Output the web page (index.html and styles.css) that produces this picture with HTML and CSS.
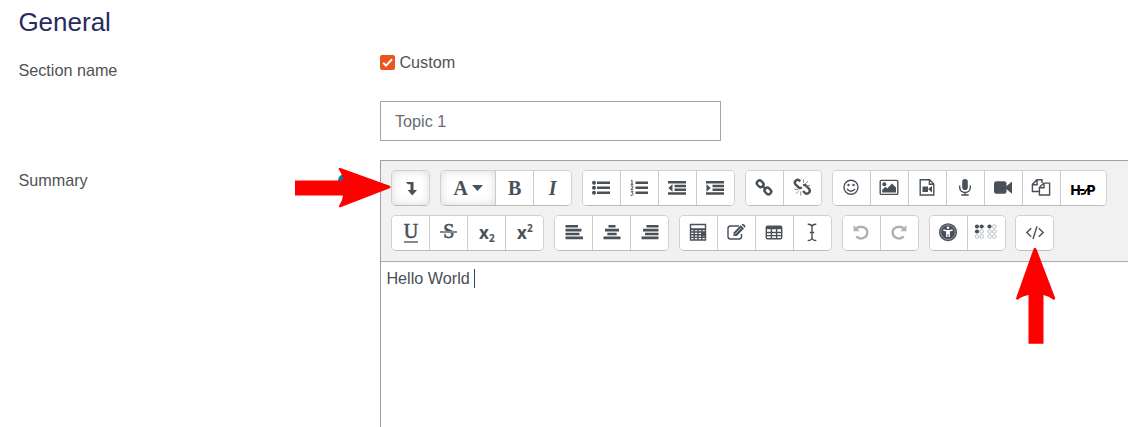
FILE: index.html
```html
<!DOCTYPE html>
<html lang="en">
<head>
<meta charset="utf-8">
<title>General</title>
<link rel="stylesheet" href="styles.css">
</head>
<body>
<main class="form">
  <h1 class="heading">General</h1>
  <div class="row row-name">
    <div class="label label-name">Section name</div>
    <div class="field">
      <label class="check">
        <svg class="checkbox" viewBox="0 0 15 15"><rect width="15" height="15" rx="2" fill="#e95420"/><path d="M3.2 7.8L6 10.6L12 4.2" fill="none" stroke="#fff" stroke-width="2"/></svg>
        <span>Custom</span>
      </label>
      <div class="input">Topic 1</div>
    </div>
  </div>
  <div class="row">
    <div class="label label-summary">Summary<span class="help"></span></div>
    <div class="editor">
      <div class="toolbar">
        <div class="tools">
          <div class="group"><button class="btn lit"><svg class="icon" viewBox="-12 -12 24 24"><path d="M-5-6H2.5V2H6L1.2 7.5L-3.3 2H-.5V-3.7H-3.2Z"/></svg></button></div>
          <div class="group">
            <button class="btn lit wide serif"><span>A</span><svg class="caret" viewBox="0 0 11 6"><path d="M0 0H11L5.5 6Z"/></svg></button>
            <button class="btn serif">B</button>
            <button class="btn serif italic">I</button>
          </div>
          <div class="group">
            <button class="btn"><svg class="icon" viewBox="-12 -12 24 24"><circle cx="-7" cy="-5.3" r="2"/><circle cx="-7" cy="-.3" r="2"/><circle cx="-7" cy="4.7" r="2"/><path d="M-4-6.5H9v2.5H-4ZM-4-1.5H9v2.5H-4ZM-4 3.5H9v2.5H-4Z"/></svg></button>
            <button class="btn"><svg class="icon" viewBox="-12 -12 24 24"><path d="M-3.5-6.5H9v2.5H-3.5ZM-3.5-1.5H9v2.5H-3.5ZM-3.5 3.5H9v2.5H-3.5Z"/><path class="line thin" d="M-8-7.3L-7-8V-3.8M-8.3-3.7H-5.8M-8.2-1.8Q-6.2-3-6-1.2Q-6.2-.1-8 1.4H-5.8M-8.2 3.3H-6L-7.2 5Q-5.6 5-5.9 6.6Q-6.3 8-8.4 7.2"/></svg></button>
            <button class="btn"><svg class="icon" viewBox="-12 -12 24 24"><path d="M-9-7H9v2.5H-9ZM-2.5-3.2H9v2.5H-2.5ZM-2.5.5H9V3H-2.5ZM-9 4.2H9v2.5H-9ZM-4.5-4V3.7L-8.7 0Z"/></svg></button>
            <button class="btn"><svg class="icon" viewBox="-12 -12 24 24"><path d="M-9-7H9v2.5H-9ZM-2.5-3.2H9v2.5H-2.5ZM-2.5.5H9V3H-2.5ZM-9 4.2H9v2.5H-9ZM-8.5-4V3.7L-4.3 0Z"/></svg></button>
          </div>
          <div class="group">
            <button class="btn"><svg class="icon" viewBox="-12 -12 24 24"><g class="line bold"><rect x="-3.5" y="-2.7" width="7" height="5.4" rx="2.5" transform="translate(-3.8 -4.2) rotate(45)"/><rect x="-3.5" y="-2.7" width="7" height="5.4" rx="2.5" transform="translate(3.9 3) rotate(45)"/><path d="M-2.2-2.6L2.2 1.5"/></g></svg></button>
            <button class="btn"><svg class="icon" viewBox="-12 -12 24 24"><path class="line bold" d="M-1.7-6.8L-3.2-8Q-5.1-8.8-6.5-7.1Q-8-5.5-6.5-3.5L-3-.3Q-1.7.6-.2-.6M1.3-2.4Q2.8-3.5 4.2-2.1L7.2 1Q8.6 2.9 7 4.7Q5.2 6.5 3.4 5.3L1 3"/><path class="line thin light" d="M1.5-5.2V-8.7M3.2-4.2L6-7M4.2-2.5H8M-3.8 1.4H-7.6M-3 2.7L-6 5.7M-1.3 3.5V7.5"/></svg></button>
          </div>
          <div class="group">
            <button class="btn"><svg class="icon" viewBox="-12 -12 24 24"><circle class="line" cx="0" cy="-.8" r="7"/><circle cx="-2.5" cy="-3" r="1.2"/><circle cx="2.5" cy="-3" r="1.2"/><path class="line" d="M-4 1Q0 5.5 4 1"/></svg></button>
            <button class="btn"><svg class="icon" viewBox="-12 -12 24 24"><rect class="line" x="-8.8" y="-7.6" width="17.6" height="14" rx="1"/><circle cx="-4.7" cy="-3.7" r="2"/><path d="M-6.8 4.5V1.8L-3.6-1.3L-1.8.4L3-4.4L7-.4V4.5Z"/></svg></button>
            <button class="btn"><svg class="icon" viewBox="-12 -12 24 24"><path class="line" d="M-6.8-8.2H2.6L6.8-4V7H-6.8ZM2.4-8V-3.8H6.6"/><path d="M-4.5-1.5H1V4H-4.5ZM1 1L5-2V4.5Z"/></svg></button>
            <button class="btn"><svg class="icon" viewBox="-12 -12 24 24"><rect x="-2.8" y="-9" width="5.6" height="11" rx="2.8"/><path class="line" d="M-5.3-2.5V-.5C-5.3 6.2 5.3 6.2 5.3-.5V-2.5M0 4.5V7M-3.7 7H3.7"/></svg></button>
            <button class="btn"><svg class="icon" viewBox="-12 -12 24 24"><rect x="-9" y="-6.7" width="12.5" height="12.5" rx="2.5"/><path d="M3-1.5L9-6.5V5.7L3 .8Z"/></svg></button>
            <button class="btn"><svg class="icon" viewBox="-12 -12 24 24"><path class="line" d="M-2 3.5H-8.6V-3.6L-4.1-8.3H1V-5M-8.4-3.3H-3.9V-8M-1.6-.4L2.8-4.9H8.6V7H-1.6ZM-1.4-.3H3V-4.6"/></svg></button>
            <button class="btn h5p"><span>H</span><svg class="h5p-mid" viewBox="0 0 9 12"><path d="M0 6H4.5M1 9.8H3Q5.5 9.6 5.3 7.3L8.5 4.5" fill="none" stroke="#000" stroke-width="1.8"/></svg><span>P</span></button>
          </div>
        </div>
        <div class="tools">
          <div class="group">
            <button class="btn serif under"><span>U</span></button>
            <button class="btn serif strike"><span>S</span></button>
            <button class="btn script"><span>x<small class="sub">2</small></span></button>
            <button class="btn script"><span>x<small class="sup">2</small></span></button>
          </div>
          <div class="group">
            <button class="btn"><svg class="icon" viewBox="-12 -12 24 24"><path d="M-8.5-8H4v2.6H-8.5ZM-8.5-4.2H7.5v2.6H-8.5ZM-8.5-.3H5.5V2.3H-8.5ZM-8.5 3.6H9v2.6H-8.5Z"/></svg></button>
            <button class="btn"><svg class="icon" viewBox="-12 -12 24 24"><path d="M-3.5-8H3.5v2.6H-3.5ZM-7-4.2H7v2.6H-7ZM-4.7-.3H4.7V2.3H-4.7ZM-8.5 3.6H8.5v2.6H-8.5Z"/></svg></button>
            <button class="btn"><svg class="icon" viewBox="-12 -12 24 24"><path d="M-3.5-8H8.5v2.6H-3.5ZM-7-4.2H8.5v2.6H-7ZM-5-.3H8.5V2.3H-5ZM-8.5 3.6H8.5v2.6H-8.5Z"/></svg></button>
          </div>
          <div class="group">
            <button class="btn"><svg class="icon" viewBox="-12 -12 24 24"><path class="line" d="M-7.5-8.5H7.5V7H-7.5ZM-7.5-3.8H7.5M-7.5-1H7.5M-7.5 1.8H7.5M-7.5 4.4H7.5M-3.8-3.8V7M0-3.8V7M3.8-3.8V7"/><path d="M-7-4.5H7v1.8H-7ZM3.8-1H7V3.5H3.8Z"/></svg></button>
            <button class="btn"><svg class="icon" viewBox="-12 -12 24 24"><path class="line" d="M3-7H-5.5Q-8-7-8-4.5V3.5Q-8 6-5.5 6H3Q5.5 6 5.5 3.5V1"/><path d="M-2.5 3V-.6L4.8-7.8L8-4.6L.8 3ZM5.6-8.6L6.5-9.3Q9.5-8.5 9.5-6.2L8.8-5.3Z"/><path d="M-1 1.2L5.2-5" stroke="#fff" stroke-width=".7"/></svg></button>
            <button class="btn"><svg class="icon" viewBox="-12 -12 24 24"><rect class="line" x="-7.7" y="-6.8" width="15.4" height="12.5" rx="1.2"/><path d="M-8-7H8v3.2H-8Z"/><path class="line" d="M-7.5-.5H7.5M-7.5 2.6H7.5M-2.6-4V5.5M2.6-4V5.5"/></svg></button>
            <button class="btn"><svg class="icon" viewBox="-12 -12 24 24"><path class="line" d="M-4.3-8.8Q-.3-9 0-6.3Q.3-9 4.3-8.8M0-6.5V5M-4.3 7.5Q-.3 7.5 0 5Q.3 7.5 4.3 7.5M-2.2-.5H2.2"/></svg></button>
          </div>
          <div class="group">
            <button class="btn faded"><svg class="icon" viewBox="-12 -12 24 24"><path class="line bold" d="M-5-4.3C-1-8.3 6.3-5.7 6.3-.8C6.3 5.7-1.7 7.2-4.7 3.2"/><path d="M-7.4-7.7V-1.8H-1.4Z"/></svg></button>
            <button class="btn faded"><svg class="icon" viewBox="-12 -12 24 24"><path class="line bold" d="M5-4.3C1-8.3-6.3-5.7-6.3-.8C-6.3 5.7 1.7 7.2 4.7 3.2"/><path d="M7.4-7.7V-1.8H1.4Z"/></svg></button>
          </div>
          <div class="group">
            <button class="btn"><svg class="icon" viewBox="-12 -12 24 24"><circle cx="0" cy="-.8" r="9"/><circle cx="0" cy="-.8" r="7.3" fill="none" stroke="#aab0b6" stroke-width=".7"/><circle cx="0" cy="-5.2" r="1.3" fill="#fff"/><path d="M-4.6-3L-1.2-2.3V4M4.6-3L1.2-2.3V4M-1.2-2.2H1.2M0-2V1" fill="none" stroke="#fff" stroke-width="1.4"/></svg></button>
            <button class="btn"><svg class="icon" viewBox="-12 -12 24 24"><g><circle cx="-9" cy="-6.5" r="2.1"/><circle cx="-4.3" cy="-6.5" r="2.1"/><circle cx="-9" cy="-1.5" r="2.1"/><circle cx="3.5" cy="-6.5" r="2.1"/></g><g fill="none" stroke="#a9adb2" stroke-width=".8"><circle cx="-4.3" cy="-1.5" r="1.8"/><circle cx="-9" cy="3.5" r="1.8"/><circle cx="-4.3" cy="3.5" r="1.8"/><circle cx="8.3" cy="-6.5" r="1.8"/><circle cx="3.5" cy="-1.5" r="1.8"/><circle cx="8.3" cy="-1.5" r="1.8"/><circle cx="3.5" cy="3.5" r="1.8"/><circle cx="8.3" cy="3.5" r="1.8"/></g></svg></button>
          </div>
          <div class="group"><button class="btn"><svg class="icon" viewBox="-12 -12 24 24"><path class="line" d="M-3.8-4.8L-8.2-.5L-3.8 3.8M3.8-4.8L8.2-.5L3.8 3.8M2-6.8L-2 6"/></svg></button></div>
        </div>
      </div>
      <div class="content">Hello World<span class="cursor"></span></div>
    </div>
  </div>
</main>
<svg class="arrows" viewBox="0 0 1128 427">
  <path d="M295 180.5H343Q342.8 175 338.5 169Q338.5 167.5 340.5 168L389 185.5Q392.5 187 389 188.5L340.5 207.3Q338 207.5 339.5 205Q342.8 200 343 195.5H295Z"/>
  <path d="M1028.5 343.8V295Q1022 296 1017.8 299.7Q1015.5 300 1016.3 297.5L1033.5 249Q1035 246.5 1036.5 249L1055 297.5Q1055.8 300 1053.5 299.7Q1049 296 1043.5 295V343.8Z"/>
</svg>
</body>
</html>
```
FILE: styles.css
```css
* { box-sizing: border-box; }
body {
  margin: 0;
  width: 1128px;
  height: 427px;
  overflow: hidden;
  position: relative;
  background: #fff;
  color: #495057;
  font: 16.2px/24px "Liberation Sans", Arial, sans-serif;
}
.form { padding-left: 18.4px; }
.heading {
  margin: 0;
  height: 50px;
  padding-top: 6px;
  color: #272b60;
  font-size: 26px;
  font-weight: 400;
  line-height: 32px;
}
.row { display: grid; grid-template-columns: 362px 1fr; }
.row-name { height: 110px; }
.label { color: #505254; }
.label-name { padding-top: 8px; }
.label-summary { display: flex; align-items: flex-start; padding-top: 8px; }
.help {
  width: 13px;
  height: 13px;
  margin: 6px 29px 0 auto;
  border-radius: 50%;
  background: #008196;
}
.check { display: flex; align-items: center; gap: 4px; color: #505254; }
.checkbox { width: 15px; height: 15px; }
.input {
  width: 341px;
  height: 40px;
  margin-top: 26.6px;
  padding: 7.4px 13.6px;
  border: 1px solid #a0a4ad;
  color: #666d74;
}
.editor {
  height: 267px;
  border: 1px solid #9c9ea9;
  border-width: 1px 0 0 1px;
}
.toolbar {
  display: flex;
  flex-direction: column;
  gap: 9px;
  height: 101px;
  padding: 9px 0 0 10px;
  background: #f1f1f1;
  border-bottom: 1px solid #aaacb5;
}
.tools { display: flex; gap: 9.8px; }
.group {
  display: flex;
  height: 36px;
  border: 1px solid #d0d0d0;
  border-bottom-color: #bcbcbc;
  border-radius: 5px;
  overflow: hidden;
  background: #fff;
}
.btn {
  display: flex;
  align-items: center;
  justify-content: center;
  width: 38px;
  height: 34px;
  padding: 0;
  border: 0;
  border-right: 1px solid #ccc;
  background: #fff;
  color: #495057;
}
.btn:last-child { width: 37px; border-right: 0; }
.lit { box-shadow: inset 0 0 10px #d9d9d9; }
.btn.wide { width: 55px; gap: 4px; }
.icon { width: 24px; height: 24px; fill: #495057; }
.caret { width: 11px; height: 6px; fill: #495057; }
.line { fill: none; stroke: #495057; stroke-width: 1.4; }
.thin { stroke-width: 1; }
.light { stroke: #8a8f94; }
.bold { stroke-width: 2.4; }
.faded .icon { fill: #afb2b5; }
.faded .line { stroke: #afb2b5; }
.serif { font: bold 20px/24px "Liberation Serif", "Times New Roman", serif; }
.italic { font-style: italic; }
.under span, .strike span { position: relative; top: -2px; font-weight: 400; -webkit-text-stroke: .6px #495057; }
.under span::after, .strike span::after {
  content: "";
  position: absolute;
  left: 0;
  right: 0;
  bottom: 0;
  height: 2px;
  background: #858a8f;
}
.strike span::after { left: -3px; right: -3px; bottom: 10px; }
.script { font: bold 17px/20px "Open Sans", sans-serif; }
.script small { font-size: 10px; line-height: 0; }
.sub { vertical-align: -3px; }
.sup { vertical-align: 7px; }
.btn.h5p { width: 45px; padding-top: 4px; color: #000; font: 800 13.5px/18px Inter, sans-serif; }
.h5p-mid { width: 9px; height: 12px; margin: 0 -2px 0 -1px; }
.content { display: flex; align-items: center; padding: 4px 5px; }
.cursor { width: 1px; height: 19px; margin-left: 4px; background: #444; }
.arrows { position: absolute; left: 0; top: 0; width: 1128px; height: 427px; fill: #f00; }
```
